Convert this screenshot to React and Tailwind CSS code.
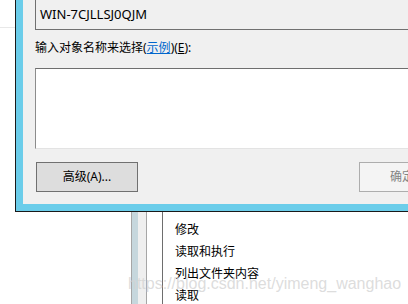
import React from "react";

const rows = ["修改", "读取和执行", "列出文件夹内容", "读取"];

const App = () => {
  return (
    <div className="relative w-[408px] h-[304px] overflow-hidden bg-white text-[12px] text-black font-['Noto_Sans','Noto_Sans_CJK_SC',sans-serif]">
      {/* window behind the dialog */}
      <div className="flex h-full">
        <div className="w-[131px]">
          <div className="h-[28px] border-b border-[#e8e8e8]" />
        </div>
        <div className="w-px bg-[#a6a6a6]" />
        <div className="w-[6px] bg-[#c6d7dd]" />
        <div className="w-[8px] bg-[#efefef]" />
        <div className="w-px bg-[#a6a6a6]" />
        <div className="w-[15px]" />
        <div className="w-px bg-[#6e6e6e]" />
        <ul className="flex-1 pl-[12px] pt-[219px]">
          {rows.map((r) => (
            <li key={r} className="h-[22px] leading-[22px]">
              {r}
            </li>
          ))}
        </ul>
      </div>

      {/* select user dialog */}
      <div className="absolute left-[15px] top-0 w-[440px] border-l border-b border-[#1a1a1a] bg-[#6bcdea] pl-[7px] pb-[7px]">
        <div className="h-[204px] bg-[#f0f0f0] pl-[12px] flex flex-col">
          <div className="h-[30px] border-l border-b border-[#707070] pl-[4px] flex items-center text-[13px]">
            WIN-7CJLLSJ0QJM
          </div>
          <div className="mt-[10px] h-[16px] leading-[16px] whitespace-nowrap">
            输入对象名称来选择(
            <span className="text-[#0066cc] underline">示例</span>)(
            <span className="underline">E</span>):
          </div>
          <div className="mt-[12px] h-[81px] bg-white border-t border-l border-b border-t-[#6e6e6e] border-l-[#8c8c8c] border-b-[#e3e3e3]" />
          <div className="mt-[13px] flex">
            <button className="ml-px w-[102px] h-[30px] bg-[#dddddd] border border-[#707070] text-[12px]">
              高级(A)...
            </button>
            <button className="ml-[221px] w-[86px] h-[30px] bg-[#f4f4f4] border border-[#adadad] text-[12px] text-[#838383]">
              确定
            </button>
          </div>
        </div>
      </div>

      {/* watermark */}
      <div className="absolute left-[128px] top-[275px] text-[16px] leading-[18px] text-[#d4d4d4]/80 font-['Liberation_Sans',sans-serif] whitespace-nowrap">
        https://blog.csdn.net/yimeng_wanghao
      </div>
    </div>
  );
};

export default App;
